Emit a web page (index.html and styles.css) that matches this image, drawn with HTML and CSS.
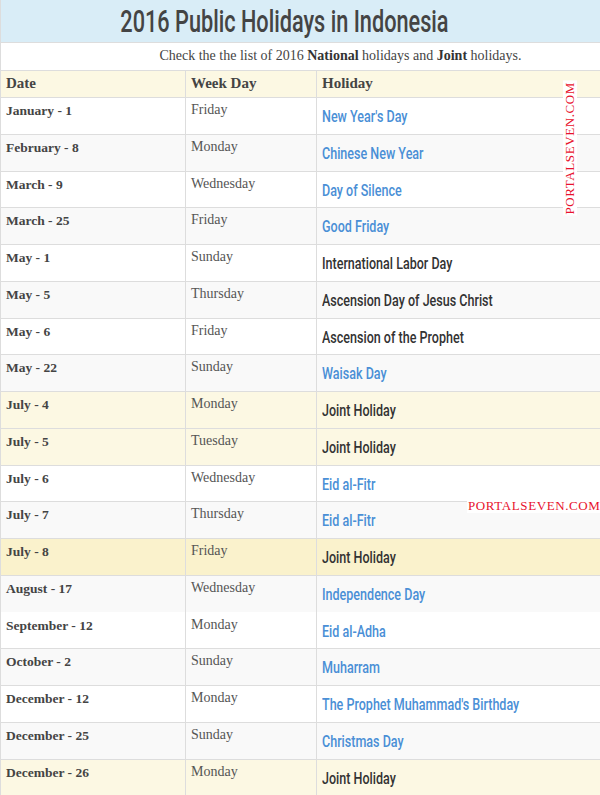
FILE: index.html
```html
<!DOCTYPE html>
<html>
<head>
<meta charset="utf-8">
<link rel="stylesheet" href="styles.css">
</head>
<body>
<div class="page">
  <h1 class="title"><span class="tt">2016 Public Holidays in Indonesia</span></h1>
  <p class="sub">Check the the list of 2016 <b>National</b> holidays and <b>Joint</b> holidays.</p>
  <table class="hol">
    <thead>
      <tr><th class="c1">Date</th><th class="c2">Week Day</th><th class="c3">Holiday</th></tr>
    </thead>
    <tbody>
      <tr class="w"><td class="d">January - 1</td><td class="wd">Friday</td><td class="h nat"><span>New Year's Day</span></td></tr>
      <tr class="g"><td class="d">February - 8</td><td class="wd">Monday</td><td class="h nat"><span>Chinese New Year</span></td></tr>
      <tr class="w"><td class="d">March - 9</td><td class="wd">Wednesday</td><td class="h nat"><span>Day of Silence</span></td></tr>
      <tr class="g"><td class="d">March - 25</td><td class="wd">Friday</td><td class="h nat"><span>Good Friday</span></td></tr>
      <tr class="w"><td class="d">May - 1</td><td class="wd">Sunday</td><td class="h dk"><span>International Labor Day</span></td></tr>
      <tr class="g"><td class="d">May - 5</td><td class="wd">Thursday</td><td class="h dk"><span>Ascension Day of Jesus Christ</span></td></tr>
      <tr class="w"><td class="d">May - 6</td><td class="wd">Friday</td><td class="h dk"><span>Ascension of the Prophet</span></td></tr>
      <tr class="g"><td class="d">May - 22</td><td class="wd">Sunday</td><td class="h nat"><span>Waisak Day</span></td></tr>
      <tr class="y"><td class="d">July - 4</td><td class="wd">Monday</td><td class="h dk"><span>Joint Holiday</span></td></tr>
      <tr class="y"><td class="d">July - 5</td><td class="wd">Tuesday</td><td class="h dk"><span>Joint Holiday</span></td></tr>
      <tr class="w"><td class="d">July - 6</td><td class="wd">Wednesday</td><td class="h nat"><span>Eid al-Fitr</span></td></tr>
      <tr class="g"><td class="d">July - 7</td><td class="wd">Thursday</td><td class="h nat"><span>Eid al-Fitr</span></td></tr>
      <tr class="y2"><td class="d">July - 8</td><td class="wd">Friday</td><td class="h dk"><span>Joint Holiday</span></td></tr>
      <tr class="g nb"><td class="d">August - 17</td><td class="wd">Wednesday</td><td class="h nat"><span>Independence Day</span></td></tr>
      <tr class="w"><td class="d">September - 12</td><td class="wd">Monday</td><td class="h nat"><span>Eid al-Adha</span></td></tr>
      <tr class="g"><td class="d">October - 2</td><td class="wd">Sunday</td><td class="h nat"><span>Muharram</span></td></tr>
      <tr class="w"><td class="d">December - 12</td><td class="wd">Monday</td><td class="h nat"><span>The Prophet Muhammad's Birthday</span></td></tr>
      <tr class="g"><td class="d">December - 25</td><td class="wd">Sunday</td><td class="h nat"><span>Christmas Day</span></td></tr>
      <tr class="y"><td class="d">December - 26</td><td class="wd">Monday</td><td class="h dk"><span>Joint Holiday</span></td></tr>
    </tbody>
  </table>
  <div class="wm wm-v">PORTALSEVEN.COM</div>
  <div class="wm wm-h">PORTALSEVEN.COM</div>
</div>
</body>
</html>
```
FILE: styles.css
```css
html, body {
  margin: 0;
  padding: 0;
  background: #fff;
}
.page {
  position: relative;
  width: 599px;
  border-left: 1px solid #ddd;
  font-family: "Liberation Serif", serif;
  color: #444;
}
.title {
  margin: 0;
  height: 42px;
  padding-right: 33px;
  background: #d9edf7;
  border-bottom: 1px solid #ddd;
  text-align: center;
  font-family: Roboto, sans-serif;
  font-weight: 500;
  font-size: 31px;
  line-height: 44px;
  color: #444;
  overflow: hidden;
  white-space: nowrap;
}
.tt {
  display: inline-block;
  transform: scaleX(0.70);
  transform-origin: 50% 50%;
}
.sub {
  margin: 0;
  height: 27px;
  padding-left: 80px;
  text-align: center;
  font-size: 14px;
  line-height: 26px;
  color: #444;
}
.sub b { color: #333; }
.hol {
  width: 599px;
  border-collapse: collapse;
  table-layout: fixed;
}
.hol th, .hol td {
  border: 1px solid #ddd;
  border-left: 0;
  text-align: left;
  vertical-align: top;
  padding: 0 5px;
}
.hol th + th, .hol td + td { border-left: 1px solid #ddd; }
.hol th:last-child, .hol td:last-child { border-right: 0; }
.hol th {
  background: #fcf8e3;
  height: 26px;
  font-size: 15px;
  line-height: 24px;
  color: #444;
}
.c1 { width: 174px; }
.c2 { width: 120px; }
.hol tbody tr { height: 36.75px; }
.w { background: #fff; }
.g { background: #f9f9f9; }
.y { background: #fcf8e3; }
.y2 { background: #faf2cc; }
.nb td { border-bottom-color: transparent; }
.hol td.d {
  font-weight: bold;
  font-size: 13.5px;
  line-height: 16px;
  padding-top: 5px;
  color: #444;
}
.hol td.wd {
  font-size: 14px;
  line-height: 16px;
  padding-top: 4px;
  color: #555;
}
.hol td.h {
  font-family: Roboto, sans-serif;
  font-weight: 500;
  font-size: 16.5px;
  line-height: 20px;
  padding-top: 9px;
  white-space: nowrap;
  overflow: hidden;
}
.h span {
  display: inline-block;
  transform: scaleX(0.76);
  transform-origin: 0 50%;
}
.nat { color: #4a8fd6; }
.dk { color: #333; }
.wm {
  position: absolute;
  background: #fff;
  color: #e8112d;
  font-family: "Liberation Serif", serif;
  font-size: 13px;
  line-height: 14px;
  letter-spacing: 0.6px;
  white-space: nowrap;
}
.wm-h {
  left: 466px;
  top: 499px;
  padding: 0 1px;
}
.wm-v {
  left: 562px;
  top: 81px;
  writing-mode: vertical-rl;
  transform: rotate(180deg);
  padding: 1px 0;
}
```
